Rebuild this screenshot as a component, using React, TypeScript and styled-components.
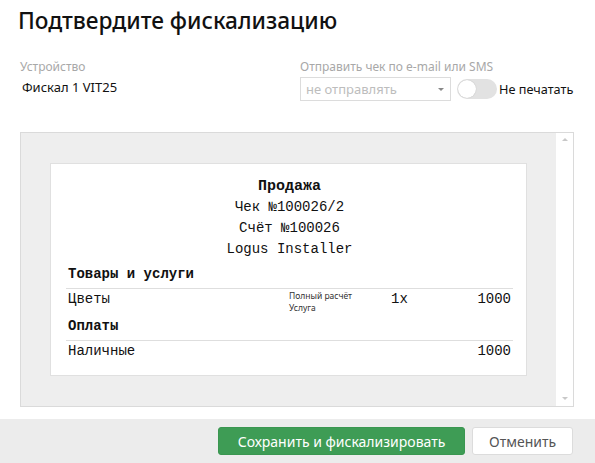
import React from "react";
import styled, { createGlobalStyle } from "styled-components";

const Global = createGlobalStyle`
  html, body { margin: 0; padding: 0; background: #fff; }
  body { font-family: "Noto Sans", "Open Sans", sans-serif; color: #111; }
  * { box-sizing: border-box; }
`;

const Page = styled.div`
  width: 595px;
  height: 463px;
  display: flex;
  flex-direction: column;
  overflow: hidden;
`;

const Title = styled.h1`
  margin: 0;
  padding: 6px 0 0 18px;
  font-size: 22.7px;
  line-height: 30px;
  font-weight: 500;
  color: #111;
`;

const Fields = styled.div`
  display: grid;
  grid-template-columns: 280px 1fr;
  padding: 24px 0 0 20px;
`;

const Field = styled.div`
  display: flex;
  flex-direction: column;
`;

const Label = styled.div`
  font-size: 12px;
  line-height: 14px;
  color: #a8a8a8;
`;

const Value = styled.div`
  font-size: 13px;
  line-height: 18px;
  margin-top: 4px;
  padding-left: 2px;
  color: #111;
`;

const ControlRow = styled.div`
  display: flex;
  align-items: center;
  margin-top: 3px;
`;

const Select = styled.div`
  width: 151px;
  height: 24px;
  border: 1px solid #dcdcdc;
  display: flex;
  align-items: center;
  justify-content: space-between;
  padding: 0 6px 0 5px;
  font-size: 13px;
  color: #bdbdbd;
`;

const Caret = styled.span`
  width: 0;
  height: 0;
  border-left: 3px solid transparent;
  border-right: 3px solid transparent;
  border-top: 3px solid #888;
`;

const Toggle = styled.div`
  width: 40px;
  height: 20px;
  border-radius: 10px;
  background: #e2e2e2;
  margin-left: 6px;
  position: relative;
`;

const Knob = styled.span`
  position: absolute;
  left: 1px;
  top: 1px;
  width: 18px;
  height: 18px;
  border-radius: 50%;
  background: #fff;
  box-shadow: 0 0 1px rgba(0, 0, 0, 0.25);
`;

const ToggleLabel = styled.span`
  font-size: 12.7px;
  margin-left: 2px;
  color: #111;
`;

const Preview = styled.div`
  margin: 31px 21px 0 20px;
  height: 275px;
  border: 1px solid #dadada;
  display: flex;
`;

const Canvas = styled.div`
  flex: 1;
  background: #eeeeee;
  display: flex;
  justify-content: center;
  padding-top: 30px;
`;

const Scrollbar = styled.div`
  width: 17px;
  background: #fff;
  display: flex;
  flex-direction: column;
  justify-content: space-between;
  align-items: center;
  padding: 5px 0 6px;
`;

const Arrow = styled.span<{ $down?: boolean }>`
  width: 0;
  height: 0;
  border-left: 3px solid transparent;
  border-right: 3px solid transparent;
  ${(p) =>
    p.$down ? "border-top: 3px solid #c8c8c8;" : "border-bottom: 3px solid #c8c8c8;"}
`;

const Paper = styled.div`
  width: 477px;
  height: 213px;
  background: #fff;
  border: 1px solid #e0e0e0;
  padding: 12px 13px 0 15px;
  font-family: "Liberation Mono", "Courier New", monospace;
  font-size: 14px;
  color: #111;
`;

const Center = styled.div`
  text-align: center;
  line-height: 21px;
`;

const Heading = styled.div<{ $big?: boolean }>`
  font-weight: bold;
  font-size: ${(p) => (p.$big ? "15px" : "14px")};
`;

const Section = styled.div<{ $top: number }>`
  font-weight: bold;
  line-height: 20px;
  padding: 0 2px 4px;
  border-bottom: 1px solid #dedede;
  margin-top: ${(p) => p.$top}px;
`;

const Row = styled.div`
  display: grid;
  grid-template-columns: 221px 102px 1fr auto;
  padding: 0 2px;
  line-height: 20px;
`;

const Small = styled.div`
  font-family: "Noto Sans", "Open Sans", sans-serif;
  font-size: 8.5px;
  line-height: 12px;
  padding-top: 1px;
  color: #333;
`;

const Footer = styled.div`
  margin-top: auto;
  height: 44px;
  background: #ececec;
  display: flex;
  justify-content: flex-end;
  align-items: center;
  gap: 7px;
  padding-right: 22px;
`;

const Button = styled.button<{ $primary?: boolean }>`
  height: 28px;
  padding: 0 16px;
  border-radius: 3px;
  font-family: "Noto Sans", "Open Sans", sans-serif;
  font-size: 14px;
  border: 1px solid ${(p) => (p.$primary ? "#3a9650" : "#dcdcdc")};
  background: ${(p) => (p.$primary ? "#3e9c55" : "#fff")};
  color: ${(p) => (p.$primary ? "#fff" : "#555")};
  width: ${(p) => (p.$primary ? "247px" : "101px")};
`;

export default function App() {
  return (
    <Page>
      <Global />
      <Title>Подтвердите фискализацию</Title>
      <Fields>
        <Field>
          <Label>Устройство</Label>
          <Value>Фискал 1 VIT25</Value>
        </Field>
        <Field>
          <Label>Отправить чек по e-mail или SMS</Label>
          <ControlRow>
            <Select>
              не отправлять
              <Caret />
            </Select>
            <Toggle>
              <Knob />
            </Toggle>
            <ToggleLabel>Не печатать</ToggleLabel>
          </ControlRow>
        </Field>
      </Fields>
      <Preview>
        <Canvas>
          <Paper>
            <Center>
              <Heading $big>Продажа</Heading>
              <div>Чек №100026/2</div>
              <div>Счёт №100026</div>
              <div>Logus Installer</div>
            </Center>
            <Section $top={4}>Товары и услуги</Section>
            <Row>
              <span>Цветы</span>
              <Small>
                Полный расчёт
                <br />
                Услуга
              </Small>
              <span>1x</span>
              <span>1000</span>
            </Row>
            <Section $top={2}>Оплаты</Section>
            <Row>
              <span>Наличные</span>
              <span />
              <span />
              <span>1000</span>
            </Row>
          </Paper>
        </Canvas>
        <Scrollbar>
          <Arrow />
          <Arrow $down />
        </Scrollbar>
      </Preview>
      <Footer>
        <Button $primary>Сохранить и фискализировать</Button>
        <Button>Отменить</Button>
      </Footer>
    </Page>
  );
}
